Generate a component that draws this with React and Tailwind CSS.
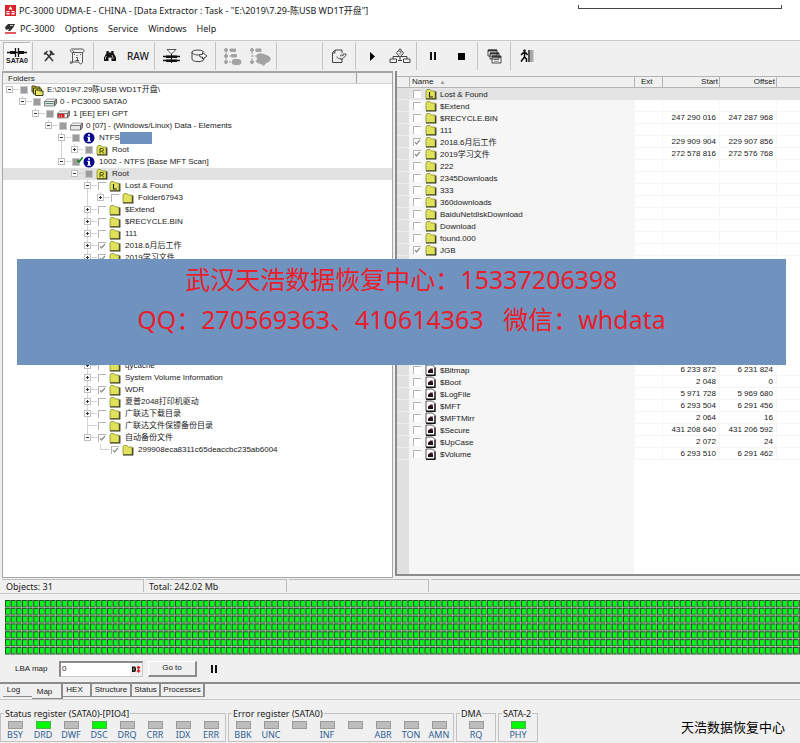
const tree = [
  { depth: 0, name: 'E:\\2019\\7.29陈USB WD1T开盘\\', icon: 'folders', check: 'partial', open: true },
  { depth: 1, name: '0 - PC3000 SATA0', icon: 'drive', check: 'partial', open: true },
  { depth: 2, name: '1 [EE] EFI GPT', icon: 'gpt', check: 'partial', open: true },
  { depth: 3, name: '0 [07] - (Windows/Linux) Data - Elements', icon: 'partition', check: 'partial', open: true },
  { depth: 4, name: 'NTFS', icon: 'info', check: 'partial', open: true, masked: true },
  { depth: 5, name: 'Root', icon: 'R', check: 'partial', open: false },
  { depth: 4, name: '1002 - NTFS [Base MFT Scan]', icon: 'info', check: 'partial', open: true, ready: true },
  { depth: 5, name: 'Root', icon: 'R', check: 'partial', open: true, selected: true },
  { depth: 6, name: 'Lost & Found', icon: 'L', check: 'off', open: true },
  { depth: 7, name: 'Folder67943', icon: 'folder', check: 'off', open: false },
  { depth: 6, name: '$Extend', icon: 'folder', check: 'off', open: false },
  { depth: 6, name: '$RECYCLE.BIN', icon: 'folder', check: 'off', open: false },
  { depth: 6, name: '111', icon: 'folder', check: 'off', open: false },
  { depth: 6, name: '2018.6月后工作', icon: 'folder', check: 'on', open: false },
  { depth: 6, name: '2019学习文件', icon: 'folder', check: 'on', open: false },
  { depth: 6, covered: true },
  { depth: 6, name: 'qycache', icon: 'folder', check: 'off', open: false },
  { depth: 6, name: 'System Volume Information', icon: 'folder', check: 'off', open: false },
  { depth: 6, name: 'WDR', icon: 'folder', check: 'on', open: false },
  { depth: 6, name: '夏普2048打印机驱动', icon: 'folder', check: 'off', open: false },
  { depth: 6, name: '广联达下载目录', icon: 'folder', check: 'off', open: false },
  { depth: 6, name: '广联达文件保镖备份目录', icon: 'folder', check: 'off' },
  { depth: 6, name: '自动备份文件', icon: 'folder', check: 'on', open: true },
  { depth: 7, name: '299908eca8311c65deaccbc235ab6004', icon: 'folder', check: 'on' },
];

const files = [
  { name: 'Lost & Found', icon: 'L', selected: true },
  { name: '$Extend' },
  { name: '$RECYCLE.BIN', start: '247 290 016', offset: '247 287 968' },
  { name: '111' },
  { name: '2018.6月后工作', checked: true, start: '229 909 904', offset: '229 907 856' },
  { name: '2019学习文件', checked: true, start: '272 578 816', offset: '272 576 768' },
  { name: '222' },
  { name: '2345Downloads' },
  { name: '333' },
  { name: '360downloads' },
  { name: 'BaiduNetdiskDownload' },
  { name: 'Download' },
  { name: 'found.000' },
  { name: 'JGB', checked: true },
];

const systemFiles = [
  { name: '$Bitmap', icon: 'file', start: '6 233 872', offset: '6 231 824' },
  { name: '$Boot', icon: 'file', start: '2 048', offset: '0' },
  { name: '$LogFile', icon: 'file', start: '5 971 728', offset: '5 969 680' },
  { name: '$MFT', icon: 'file', start: '6 293 504', offset: '6 291 456' },
  { name: '$MFTMirr', icon: 'file', start: '2 064', offset: '16' },
  { name: '$Secure', icon: 'file', start: '431 208 640', offset: '431 206 592' },
  { name: '$UpCase', icon: 'file', start: '2 072', offset: '24' },
  { name: '$Volume', icon: 'file', start: '6 293 510', offset: '6 291 462' },
];

const registers = [
  { title: 'Status register (SATA0)-[PIO4]', leds: ['BSY', 'DRD', 'DWF', 'DSC', 'DRQ', 'CRR', 'IDX', 'ERR'], on: ['DRD', 'DSC'] },
  { title: 'Error register (SATA0)', leds: ['BBK', 'UNC', '', 'INF', '', 'ABR', 'TON', 'AMN'], on: [] },
  { title: 'DMA', leds: ['RQ'], on: [] },
  { title: 'SATA-2', leds: ['PHY'], on: ['PHY'] },
];

// true when another row of the same level follows under the same parent
function hasNext(index, level) {
  for (let i = index + 1; i < tree.length; i++) {
    if (tree[i].depth < level) return false;
    if (tree[i].depth === level) return true;
  }
  return false;
}

function RowIcon({ type }) {
  if (type === 'folders') {
    return (
      <svg width="13" height="12" viewBox="0 0 13 12" className="shrink-0">
        <path d="M1 2h3l1 1h4v5H1z" fill="#c9c832" stroke="#3c3c10" />
        <path d="M2.500 4h3l1 1h4v5h-8z" fill="#dfe052" stroke="#3c3c10" />
        <path d="M4.500 6h3l1 1h3.500v4.500H4.500z" fill="#e8e968" stroke="#3c3c10" />
      </svg>
    );
  }
  if (type === 'drive' || type === 'gpt' || type === 'partition') {
    return (
      <svg width="13" height="12" viewBox="0 0 13 12" className="shrink-0">
        <path d="M3 3h9.500l-2 2.500H.5z" fill="#f4f4f4" stroke="#777" strokeWidth=".7" />
        <path d="M.5 5.500h10v4.500H.5z" fill={type === 'drive' ? '#dbe6df' : '#e8e8e8'} stroke="#666" strokeWidth=".8" />
        <path d="M10.500 5.500l2-2.500v4.500l-2 2.500z" fill="#999" stroke="#555" strokeWidth=".8" />
        {type === 'drive' && <path d="M1.500 7.500h8" stroke="#5b8a70" />}
        {type === 'gpt' && <path d="M1 6h6.500v3.500H1z" fill="#d32020" />}
        {type === 'gpt' && <path d="M2 8h1M4 8h1" stroke="#fff" strokeWidth=".8" />}
      </svg>
    );
  }
  if (type === 'info') {
    return (
      <svg width="12" height="12" viewBox="0 0 12 12" className="shrink-0">
        <circle cx="6" cy="6" r="5.500" fill="#07078c" />
        <path d="M5 2.200h2v1.500H5zM4.300 4.700H7v4h.9v1H4.200v-1H5V5.700h-.7z" fill="#fff" />
      </svg>
    );
  }
  if (type === 'file') {
    return (
      <svg width="11" height="12" viewBox="0 0 11 12" className="shrink-0">
        <path d="M1 1h6.500L10 3.500V11H1z" fill="#fff" stroke="#555" />
        <path d="M10 3.500V11.300H1" fill="none" stroke="#111" strokeWidth="1.200" />
        <path d="M3 9V6.500l1.200-.7 1-1.300L7 5l1 1.500V9H3z" fill="#221018" />
        <path d="M6 4.500h2v1.300H6z" fill="#8a2030" />
      </svg>
    );
  }
  return (
    <svg width="12" height="12" viewBox="0 0 12 12" className="shrink-0">
      <path d="M1 10.500V3l1-1.500h3L6.200 3H10v7.500z" fill="#dfe25a" stroke="#8d8f33" strokeWidth=".8" />
      <path d="M1 11h9.800V3.500" fill="none" stroke="#2f2f12" strokeWidth="1.200" />
      {type === 'R' && <path d="M4 9.500V4.500h2.300a1.200 1.200 0 0 1 0 2.500H4M6 7l1.700 2.500" fill="none" stroke="#4d4d00" />}
      {type === 'L' && <path d="M4.500 4v5H8" fill="none" stroke="#222" strokeWidth="1.100" />}
    </svg>
  );
}

function CheckBox({ label, state }) {
  if (state === 'partial') {
    return (
      <input
        type="checkbox"
        aria-label={label}
        className="size-2 shrink-0 appearance-none border border-[#c8c8c8] bg-[#9c9c9c]"
      />
    );
  }
  return (
    <span className="relative flex size-2 shrink-0">
      <input
        type="checkbox"
        aria-label={label}
        defaultChecked={state === 'on'}
        className="peer size-2 appearance-none border-t border-l border-[#b4b4b4] bg-white"
      />
      <svg viewBox="0 0 8 8" className="pointer-events-none absolute inset-0 hidden size-2 peer-checked:block">
        <path d="M2 4l1.500 2L7 2" fill="none" stroke="#8a8a8a" strokeWidth="1.200" />
      </svg>
    </span>
  );
}

function Expander({ open }) {
  return (
    <svg width="13" height="12" viewBox="0 0 13 12" className="relative">
      <rect x="3.500" y="2.500" width="6" height="6" fill="#fff" stroke="#c0c0c0" />
      <path d="M5 5.500h3" stroke="#333" />
      {!open && <path d="M6.500 4v3" stroke="#333" />}
    </svg>
  );
}

function TreeRow({ row, index }) {
  if (row.covered) return <li aria-hidden="true" className="h-24" />;

  const levels = Array.from({ length: row.depth });
  return (
    <li className={`flex h-3 items-center whitespace-nowrap ${row.selected ? 'bg-[#e2e2e2]' : ''}`}>
      {levels.map((_, level) => (
        <span key={level} className="flex h-3 w-[13px] shrink-0 justify-center">
          {level > 0 && hasNext(index, level) && <span className="w-px bg-[#d4d4d4]" />}
        </span>
      ))}
      <span className="relative h-3 w-[13px] shrink-0">
        <svg width="16" height="12" viewBox="0 0 16 12" className="absolute inset-0">
          <path
            d={`M6.500 ${row.depth === 0 ? 6 : 0}V${hasNext(index, row.depth) ? 12 : 6}M6.500 5.500H16`}
            fill="none"
            stroke="#d4d4d4"
          />
        </svg>
        {row.open !== undefined && (
          <button type="button" aria-label={`Toggle ${row.name}`} className="absolute inset-0">
            <Expander open={row.open} />
          </button>
        )}
      </span>
      <span className="relative flex w-[15px] shrink-0 justify-center">
        <CheckBox label={row.name} state={row.check} />
        {row.ready && (
          <svg width="6" height="6" viewBox="0 0 6 6" className="absolute -top-px right-0">
            <path d="M0 3l2 2 4-5" fill="none" stroke="#0a7a1a" strokeWidth="1.500" />
          </svg>
        )}
      </span>
      <span className="flex w-4 shrink-0">
        <RowIcon type={row.icon} />
      </span>
      <span>{row.name}</span>
      {row.masked && <span className="h-3 w-8 bg-[#6f92bf]" />}
    </li>
  );
}

function FileRow({ file }) {
  const cell = file.selected ? 'bg-[#e4e4e4]' : 'border-b border-l border-[#f6f6f6]';
  return (
    <tr className="h-3">
      <td className="border-b border-[#ececec] bg-[#e0e0e0] p-0" />
      <td className={`p-0 ${file.selected ? 'bg-[#e4e4e4]' : 'bg-[#f6f6f6]'}`}>
        <div className="flex h-3 items-center pl-1">
          <CheckBox label={file.name} state={file.checked ? 'on' : 'off'} />
          <span className="flex w-[19px] shrink-0 pl-1">
            <RowIcon type={file.icon || 'folder'} />
          </span>
          <span>{file.name}</span>
        </div>
      </td>
      <td className={`p-0 ${cell}`} />
      <td className={`p-0 pr-[3px] text-right ${cell}`}>{file.start}</td>
      <td className={`p-0 pr-[3px] text-right ${cell}`}>{file.offset}</td>
      <td className={`p-0 ${cell}`} />
    </tr>
  );
}

function ToolButton({ label, children }) {
  return (
    <button type="button" aria-label={label} className="flex h-7 w-7 shrink-0 items-center justify-center">
      {children}
    </button>
  );
}

function Separator() {
  return (
    <span className="flex w-[5px] shrink-0 justify-center">
      <span className="h-7 w-px bg-[#c3c3c3]" />
    </span>
  );
}

function Toolbar() {
  return (
    <div className="flex h-[31px] items-center border-t border-[#c9c9c9] bg-[#f0f0f0] pl-[3px]">
      <button type="button" className="flex h-7 w-[27px] shrink-0 flex-col items-center justify-center border-t border-l border-[#b8b8b8] bg-[#f8f8f8]">
        <svg width="20" height="9" viewBox="0 0 20 9">
          <path d="M0 4.500h20" stroke="#111" strokeWidth="1.500" />
          <path d="M3 3h5v3H3zM12 3h5v3h-5z" fill="#111" />
          <path d="M8.500 0v9M11.500 0v9" stroke="#111" strokeWidth="1.300" />
        </svg>
        <span className="font-['Liberation_Sans'] text-[7px] leading-[8px] font-bold">SATA0</span>
      </button>
      <Separator />
      <ToolButton label="Settings">
        <svg width="12" height="12" viewBox="0 0 12 12" fill="none" stroke="#333">
          <path d="M2 11l6-7M10 11L4 4" strokeWidth="1.500" />
          <path d="M1 4.500L4.500 1M1.500 2.500l2.500 2M6.500 1c2 0 2.500 1 3 2s1 1.500 2 1.500M7 2.500l2.500 2.500" strokeWidth="1.300" />
        </svg>
      </ToolButton>
      <ToolButton label="Script">
        <svg width="16" height="17" viewBox="0 0 16 17" fill="none" stroke="#555">
          <path d="M3.500 4.500v9.500c0 2-2.500 2-2.500 0h9c0 2.500 3.500 2.500 3.500 0V4.500" />
          <path d="M3.500 4.500C1 4.500.8 1 3 1h10.500c2 0 2 3.500 0 3.500H3.500c1.500 0 1.500-2 0-2" />
          <path d="M8 7v1M7 9.500h1.500v3M6.500 12.500H10M5 6.500h1M11 6.500h1" />
        </svg>
      </ToolButton>
      <Separator />
      <ToolButton label="Find">
        <svg width="12" height="11" viewBox="0 0 12 11" fill="#111">
          <path d="M2.500 0h2.200v1.500h2.600V0h2.200v2L12 6.500V10H7.500V6.500h-3V10H0V6.500L2.500 2z" />
          <path d="M1.500 8V6.500l1-1.500M9 8V6.500L8 4" fill="none" stroke="#fff" strokeWidth=".7" />
        </svg>
      </ToolButton>
      <ToolButton label="RAW recovery">
        <span className="text-[10px] font-medium">RAW</span>
      </ToolButton>
      <Separator />
      <ToolButton label="Drive map">
        <svg width="17" height="15" viewBox="0 0 17 15">
          <path d="M4 .5h9L8.500 5z" fill="#fff" stroke="#444" strokeWidth=".9" />
          <path d="M8.500 5v9" stroke="#111" />
          <path d="M0 7.500h17M0 11.500h17" stroke="#111" strokeWidth="1.500" />
          <path d="M3 6.500h11v2.500H3zM3 10.500h11V13H3z" fill="#111" />
        </svg>
      </ToolButton>
      <ToolButton label="Save to disk">
        <svg width="17" height="14" viewBox="0 0 17 14" fill="none" stroke="#444">
          <path d="M1 3v7c0 3.500 12 3.500 12 0V8" />
          <path d="M13 3.500C13 .3 1 .3 1 3.200s7 3 8 2.600" />
          <path d="M8.500 5.500h3V3.500L16 7l-4.500 3V8H9z" fill="#fff" />
        </svg>
      </ToolButton>
      <Separator />
      <ToolButton label="Tree item">
        <svg width="19" height="19" viewBox="0 0 19 19" fill="#a3a3a3" stroke="#a3a3a3">
          <path d="M3 2v14M3 3h6M3 9h6M3 15h6" fill="none" strokeDasharray="2 1" />
          <circle cx="3" cy="3" r="1.500" /><circle cx="3" cy="9" r="1.500" /><circle cx="3" cy="15" r="1.500" />
          <path d="M7.500 2h5v2.500h-5zM8.500 7.500h5v2.500h-5z" />
          <rect x="9" y="12.500" width="9" height="5" rx="2.500" />
        </svg>
      </ToolButton>
      <ToolButton label="Tree group">
        <svg width="22" height="19" viewBox="0 0 22 19" fill="#a3a3a3" stroke="#a3a3a3">
          <path d="M3 2v14M3 3h6M3 9h4" fill="none" strokeDasharray="2 1" />
          <circle cx="3" cy="3" r="1.500" /><circle cx="3" cy="15" r="1.500" />
          <path d="M7 2h5v2.500H7z" />
          <path d="M8 8c3-2 5-1 8 0s6 2 5 5-4 1-5 4-4-1-6-1-4-2-2-3-2-4 0-5z" />
        </svg>
      </ToolButton>
      <Separator />
      <span className="w-[41px] shrink-0" />
      <Separator />
      <ToolButton label="Export">
        <svg width="16" height="15" viewBox="0 0 16 15" fill="none" stroke="#444">
          <path d="M11 10v3.500H1.500V3.500L4 1h7v3" />
          <path d="M1.500 4H4V1" />
          <path d="M6 7.500c0 2.500 3 2.800 4 1.500v2L15 6.500V5h-3v2c-2-2-3-1-2 .5" strokeWidth=".9" />
        </svg>
      </ToolButton>
      <Separator />
      <ToolButton label="Start">
        <svg width="5" height="9" viewBox="0 0 5 9"><path d="M0 0l5 4.500L0 9z" fill="#000" /></svg>
      </ToolButton>
      <ToolButton label="Process tree">
        <svg width="22" height="16" viewBox="0 0 22 16" fill="#f4f4f4" stroke="#444">
          <path d="M4 11V8.500h14V11M11 9v3.500" fill="none" />
          <path d="M11 .7l3.500 4.300L11 9.300 7.500 5z" />
          <path d="M10 4c0-1.500 2.300-1.300 2 .2L11 5.500v1" fill="none" />
          <path d="M1 11h6.500v3.500H1zM14.500 11H21v3.500h-6.500zM9 12.500h4" />
        </svg>
      </ToolButton>
      <Separator />
      <ToolButton label="Pause">
        <svg width="6" height="8" viewBox="0 0 6 8"><path d="M0 0h2v8H0zM4 0h2v8H4z" fill="#111" /></svg>
      </ToolButton>
      <ToolButton label="Stop">
        <span className="size-[7px] bg-black" />
      </ToolButton>
      <Separator />
      <ToolButton label="Windows">
        <svg width="15" height="15" viewBox="0 0 15 15" fill="#fff" stroke="#333" strokeWidth=".9">
          <path d="M1 1h9v6H1zM3 4h9v6H3zM5 7h9v7H5z" />
          <path d="M1 1.500h9M3 4.500h9M5 7.700h9" strokeWidth="2" />
          <path d="M7 10.500h5M7 12.300h5" strokeWidth=".6" />
        </svg>
      </ToolButton>
      <Separator />
      <ToolButton label="Exit">
        <svg width="14" height="14" viewBox="0 0 14 14">
          <circle cx="4.500" cy="1.800" r="1.300" fill="#000" />
          <path d="M4.500 3v5M1 6l2-2h3l1.500 2M4.500 8L1 12.500M4.500 8l2 2v3" fill="none" stroke="#000" strokeWidth="1.500" />
          <path d="M8 1h5.500v12H8z" fill="#aaa" />
          <path d="M9 1v12" stroke="#333" strokeWidth="1.500" />
        </svg>
      </ToolButton>
    </div>
  );
}

function RegisterGroup({ group }) {
  return (
    <fieldset className="min-w-0 shrink-0 border border-[#c2c2c2] pb-px">
      <legend className="ml-[3px] h-[11px] px-px text-[9px] leading-[11px] whitespace-nowrap">{group.title}</legend>
      <div className="flex min-w-[38px] justify-center">
        {group.leds.map((led, i) => (
          <div key={i} className="flex w-7 flex-col items-center pt-0.5">
            <span
              className={`h-2 w-[15px] border ${
                group.on.includes(led) ? 'border-[#4fae4f] bg-[#00f800]' : 'border-[#9a9a9a] bg-[#bdbdbd]'
              }`}
            />
            <span className="h-[11px] text-[9px] leading-[12px] text-[#2f5d93]">{led}</span>
          </div>
        ))}
      </div>
    </fieldset>
  );
}

export default function App() {
  return (
    <div className="flex min-h-screen flex-col overflow-hidden bg-[#f0f0f0] font-['Noto_Sans','Noto_Sans_CJK_SC',sans-serif] text-[9px] leading-[12px] text-[#1a1a1a]">
      {/* Title bar */}
      <header className="bg-white pb-1">
        <div className="flex h-[21px] items-center pl-[5px]">
          <svg width="11" height="11" viewBox="0 0 11 11" className="mr-[3px] shrink-0">
            <path d="M0 0h11v11H0z" fill="#d8232a" />
            <path d="M5.500 1l2 3.500h-4zM1.500 6h3v3.500h-3zM6.500 6h3v3.500h-3z" fill="#fff" />
            <path d="M2 7.500h7" stroke="#d8232a" strokeWidth=".8" />
          </svg>
          <h1 className="whitespace-nowrap">PC-3000 UDMA-E - CHINA - [Data Extractor : Task - "E:\2019\7.29-陈USB WD1T开盘"]</h1>
          <span className="mr-[18px] mb-2 ml-auto h-1 w-[204px] border-x border-b border-[#444]" />
        </div>
        <nav className="flex h-[15px] items-center gap-[10px] pl-[5px]">
          <a href="#main" className="flex items-center">
            <svg width="11" height="11" viewBox="0 0 11 11" className="mr-1">
              <path d="M0 4l3-3h7L8 5l-3 3H3l1-2-3 1z" fill="#333" />
              <path d="M5 2.500h3" stroke="#ccc" />
              <path d="M0 10h11" stroke="#d8232a" strokeWidth="1.500" />
            </svg>
            PC-3000
          </a>
          <a href="#options">Options</a>
          <a href="#service">Service</a>
          <a href="#windows">Windows</a>
          <a href="#help">Help</a>
        </nav>
      </header>

      <Toolbar />

      {/* Panes */}
      <main id="main" className="relative flex flex-1 gap-0.5 pl-0.5 font-['Liberation_Sans','Noto_Sans_CJK_SC',sans-serif] text-[8px]">
        <section className="flex w-[49%] flex-col border border-t-2 border-[#a6a6a6] bg-white">
          <div className="flex h-[11px] items-center border-b border-[#d0d0d0] bg-[#f0f0f0]">
            <h2 className="h-full w-[354px] border-r border-[#a0a0a0] pl-[5px] leading-[11px]">Folders</h2>
          </div>
          <ul>
            {tree.map((row, i) => (
              <TreeRow key={i} row={row} index={i} />
            ))}
          </ul>
        </section>

        <section className="mb-0.5 flex min-w-0 flex-1 flex-col border-b-2 border-l-2 border-[#8c8c8c] bg-[#f0f0f0] pt-[5px]">
          <table className="w-full table-fixed border-separate border-spacing-0 bg-white leading-[11px]">
            <colgroup>
              <col className="w-3" />
              <col className="w-[225px]" />
              <col className="w-7" />
              <col className="w-[57px]" />
              <col className="w-[57px]" />
              <col />
            </colgroup>
            <thead>
              <tr className="h-3 bg-[#f0f0f0] text-right">
                <th className="border-t border-b border-[#b4b4b4] p-0" />
                <th className="border-t border-b border-l border-[#b4b4b4] p-0 pl-0.5 text-left leading-[10px] font-normal">
                  Name <span className="ml-1 text-[6px] text-[#999]">▲</span>
                </th>
                <th className="border-t border-b border-l border-[#b4b4b4] p-0 pl-1.5 text-left leading-[10px] font-normal">Ext</th>
                <th className="border-t border-b border-l border-[#b4b4b4] p-0 pr-px leading-[10px] font-normal">Start</th>
                <th className="border-t border-b border-l border-[#b4b4b4] p-0 pr-px leading-[10px] font-normal">Offset</th>
                <th className="border-t border-b border-l border-[#b4b4b4] p-0" />
              </tr>
            </thead>
            <tbody>
              {files.map((file) => (
                <FileRow key={file.name} file={file} />
              ))}
              <tr aria-hidden="true" className="h-[108px]">
                <td className="bg-[#e0e0e0] p-0" />
                <td className="bg-[#f6f6f6] p-0" />
                <td colSpan={4} className="p-0" />
              </tr>
              {systemFiles.map((file) => (
                <FileRow key={file.name} file={file} />
              ))}
            </tbody>
          </table>
          <div className="flex flex-1 bg-white">
            <span className="w-3 shrink-0 bg-[#e0e0e0]" />
            <span className="w-[225px] shrink-0 bg-[#f6f6f6]" />
          </div>
        </section>

        <div className="absolute top-[188px] right-[14px] left-[17px] h-[106px] bg-[#6f92bf] text-center font-['Noto_Sans','Noto_Sans_CJK_SC',sans-serif] text-[25px] leading-[40px] whitespace-pre text-[#e81e2b]">
          <p>武汉天浩数据恢复中心：15337206398</p>
          <p>QQ：270569363、410614363   微信：whdata</p>
        </div>
      </main>

      <div className="flex h-4 items-center gap-0.5 border-b border-[#c8c8c8] pl-0.5 text-[9px] leading-[13px]">
        <span className="h-[13px] w-[142px] border-t border-r border-[#bdbdbd] pl-1">Objects: 31</span>
        <span className="h-[13px] w-[141px] border-t border-r border-[#bdbdbd] pl-[3px]">Total: 242.02 Mb</span>
        <span className="h-[13px] w-[140px] border-t border-r border-[#bdbdbd]" />
        <span className="h-[13px] flex-1 border-t border-[#bdbdbd]" />
      </div>

      {/* Sector map */}
      <section className="border-b-2 border-[#8c8c8c] pt-[6px] pl-[5px] font-['Liberation_Sans',sans-serif] text-[8px]">
        <svg className="block h-[55px] w-full">
          <defs>
            <pattern id="sector" width="5.670" height="7.830" patternUnits="userSpaceOnUse">
              <rect width="5.670" height="7.830" fill="#d0c8d0" />
              <rect width="5.100" height="7.100" fill="#1c521c" />
              <rect x="1" y="1" width="3.600" height="5.300" fill="#00ff18" />
            </pattern>
          </defs>
          <rect width="100%" height="55" fill="url(#sector)" />
        </svg>
        <div className="flex h-[27px] items-center pl-[10px]">
          <label htmlFor="lba" className="w-11">LBA map</label>
          <span className="flex h-4 w-[84px] items-center border border-t-2 border-l-2 border-[#c8c8c8] border-t-[#8a8a8a] border-l-[#8a8a8a] bg-white">
            <input id="lba" defaultValue="0" className="min-w-0 flex-1 pl-px outline-none" />
            <button type="button" aria-label="Number format" className="flex h-full w-3 items-center justify-center bg-[#f0f0f0]">
              <svg width="9" height="7" viewBox="0 0 9 7">
                <path d="M0 .5h2.500c2 0 2 5.500 0 5.500H0z" fill="#111" />
                <path d="M1.800 2v2.500" stroke="#fff" strokeWidth=".7" />
                <path d="M6.500 0v6.500M5 2l1.500-1.500L8 2M5 4.500L6.500 6 8 4.500" fill="none" stroke="#d81e1e" strokeWidth="1.300" />
              </svg>
            </button>
          </span>
          <button type="button" className="ml-[5px] h-4 w-[49px] border border-r-2 border-b-2 border-white border-r-[#8c8c8c] border-b-[#8c8c8c]">
            Go to
          </button>
          <button type="button" aria-label="Pause map" className="ml-[14px]">
            <svg width="6" height="8" viewBox="0 0 6 8"><path d="M0 0h2v8H0zM4 0h2v8H4z" fill="#111" /></svg>
          </button>
        </div>
      </section>

      <div role="tablist" className="flex h-[16px] items-start border-b border-[#c8c8c8] pl-[3px] font-['Liberation_Sans',sans-serif] text-[8px]">
        <button type="button" role="tab" className="h-[13px] w-[29px] border-b border-[#8c8c8c] pr-2">Log</button>
        <button type="button" role="tab" aria-selected="true" className="h-[15px] w-[31px] border-r-2 border-b border-[#8c8c8c] pt-0.5 pr-1">Map</button>
        <button type="button" role="tab" className="h-[13px] w-[29px] border-r-2 border-b border-[#8c8c8c] pr-1">HEX</button>
        <button type="button" role="tab" className="h-[13px] w-10 border-r-2 border-b border-[#8c8c8c]">Structure</button>
        <button type="button" role="tab" className="h-[13px] w-[29px] border-r-2 border-b border-[#8c8c8c]">Status</button>
        <button type="button" role="tab" className="h-[13px] w-[44px] border-r-2 border-b border-[#8c8c8c]">Processes</button>
      </div>

      <footer className="flex items-start gap-0.5 pt-[8px] pb-px">
        {registers.map((group) => (
          <RegisterGroup key={group.title} group={group} />
        ))}
        <span className="mt-[11px] mr-[15px] ml-auto text-[13px] leading-[16px] whitespace-nowrap text-black">天浩数据恢复中心</span>
      </footer>
    </div>
  );
}
